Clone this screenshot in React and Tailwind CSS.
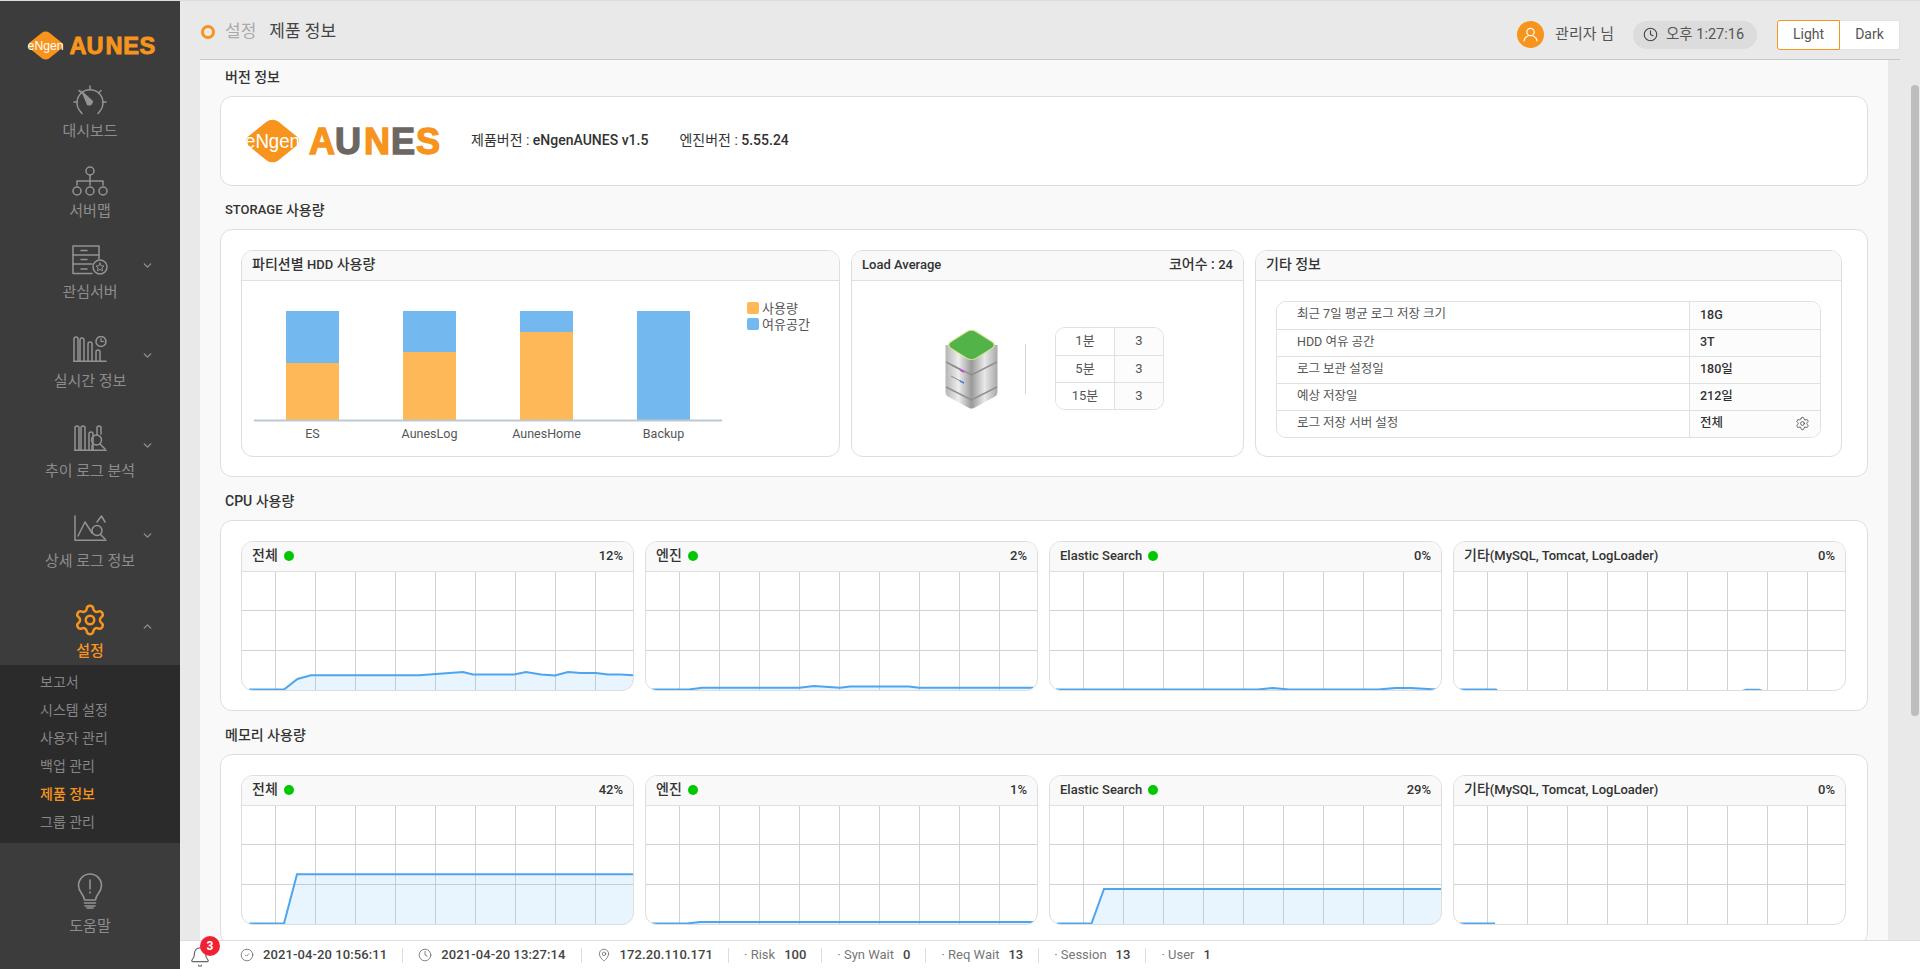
import React from "react";
import { Settings, ChevronDown, ChevronUp, Bell, CircleCheck, Clock, MapPin } from "lucide-react";

const ORANGE = "#f7941d";
const GRAY = "#6d6764";

function Logo({ width, height, mono }) {
  const letters = [
    ["A", ORANGE],
    ["U", mono ? ORANGE : GRAY],
    ["N", ORANGE],
    ["E", mono ? ORANGE : GRAY],
    ["S", ORANGE],
  ];
  const xs = [68, 94, 123, 150, 175];
  return (
    <svg width={width} height={height} viewBox="0 0 200 50" fill="none">
      <g transform="translate(31.500 25) scale(1.250 1) rotate(45)">
        <rect x="-17" y="-17" width="34" height="34" rx="6.500" fill={ORANGE} />
      </g>
      <text
        x="31.500"
        y="31.500"
        textAnchor="middle"
        fontFamily="'Liberation Sans', sans-serif"
        fontSize="20"
        fill="#fff"
        textLength="55"
        lengthAdjust="spacingAndGlyphs"
      >
        eNgen
      </text>
      {letters.map(([c, col], i) => (
        <text
          key={c}
          x={xs[i]}
          y="38"
          fontFamily="'Liberation Sans', sans-serif"
          fontWeight="700"
          fontSize="36"
          fill={col}
          stroke={col}
          strokeWidth="1.400"
        >
          {c}
        </text>
      ))}
    </svg>
  );
}

const ic = { fill: "none", stroke: "#939393", strokeWidth: 1.5, strokeLinecap: "round", strokeLinejoin: "round" };

function GaugeIcon() {
  return (
    <svg width="34" height="30" viewBox="0 0 34 30" {...ic}>
      <path d="M9 28.5 L7 26 A13 13 0 1 1 27 26 L25 28.5" />
      <path d="M17 1 v3.5 M6 5.5 l2.5 2.5 M28 5.5 l-2.5 2.5 M1 17 h3.5 M29.500 17 h3.500" />
      <path d="M7.500 4.500 L14 10.500 L20 16 A4 4 0 0 1 14 20 Z" fill="#939393" stroke="none" />
    </svg>
  );
}
function MapIcon() {
  return (
    <svg width="36" height="31" viewBox="0 0 36 31" {...ic}>
      <circle cx="18" cy="5" r="4" />
      <path d="M18 9 V19 M18 15 H5 V19 M18 15 H31 V19" />
      <circle cx="5" cy="25" r="4" />
      <circle cx="18" cy="25" r="4" />
      <circle cx="31" cy="25" r="4" />
    </svg>
  );
}
function ServerStarIcon() {
  return (
    <svg width="36" height="30" viewBox="0 0 36 30" {...ic}>
      <path d="M27 14 V1 H1 V28.500 H20" />
      <path d="M1 10 H27 M1 19 H20" />
      <path d="M9 5.500 H15 M9 14.500 H15 M9 24 H15" />
      <circle cx="28" cy="22" r="7" />
      <path d="M28 18 L29.200 20.800 L32 21 L29.900 22.900 L30.500 25.800 L28 24.300 L25.500 25.800 L26.100 22.900 L24 21 L26.800 20.800 Z" strokeWidth="1" />
    </svg>
  );
}
const bar = (x, y) => `M${x} 25 V${y + 2} a2 2 0 0 1 4 0 V25`;
function ChartClockIcon() {
  return (
    <svg width="34" height="26" viewBox="0 0 34 26" {...ic}>
      <path d="M0.500 25.200 H33" />
      <path d={bar(1, 1)} />
      <path d={bar(7, 2)} />
      <path d={bar(15, 6)} />
      <path d={bar(23, 14)} />
      <circle cx="28" cy="5.500" r="5" />
      <path d="M28 2.500 V5.500 H31" strokeWidth="1.2" />
    </svg>
  );
}
function ChartSearchIcon() {
  return (
    <svg width="33" height="26" viewBox="0 0 33 26" {...ic}>
      <path d="M0.500 25.200 H32" />
      <path d={bar(1, 1)} />
      <path d={bar(7, 1)} />
      <path d={bar(15, 7)} />
      <path d="M23 10 V3 a2 2 0 0 1 4 0 V9" />
      <circle cx="22.500" cy="15" r="5" />
      <path d="M26 19 L31 24 M18 20 V25" />
    </svg>
  );
}
function LineSearchIcon() {
  return (
    <svg width="33" height="26" viewBox="0 0 33 26" {...ic}>
      <path d="M1 1 V25.200 H32" />
      <path d="M4 21 L11 7 L18 18" />
      <path d="M23 7 L27.500 1 L31 7" />
      <circle cx="23" cy="15.500" r="5" />
      <path d="M26.500 19.500 L31 24" />
    </svg>
  );
}
function BulbIcon() {
  return (
    <svg width="26" height="36" viewBox="0 0 26 36" {...ic} strokeWidth="1.6">
      <path d="M7.500 27 C7 21 1.500 19.500 1.500 12.500 A11.500 11.500 0 0 1 24.500 12.500 C24.500 19.500 19 21 18.500 27 Z" />
      <path d="M7.500 30 H18.500 M8 33 H18 M10 35 H16" />
      <path d="M13 7 V16 M13 19 V20" />
    </svg>
  );
}
function ServerIllustration() {
  return (
    <svg width="53" height="81" viewBox="0 0 53 81">
      <defs>
        <linearGradient id="srv" x1="0" x2="1" y1="0" y2="0">
          <stop offset="0" stopColor="#b5b5b5" />
          <stop offset="0.25" stopColor="#ededed" />
          <stop offset="0.5" stopColor="#9a9a9a" />
          <stop offset="0.75" stopColor="#e8e8e8" />
          <stop offset="1" stopColor="#a8a8a8" />
        </linearGradient>
      </defs>
      <path d="M0.500 17 V64 Q0.500 67 3 68.500 L24 80 Q26.500 81 29 80 L50 68.500 Q52.500 67 52.500 64 V17 Z" fill="url(#srv)" />
      <path d="M1 34 L26.500 47 L52 34 M1 59 L26.500 72 L52 59" fill="none" stroke="#8f8f8f" strokeWidth="1.500" />
      <path d="M6 37 L19 44 M6 48 L19 55" stroke="#8a8a8a" strokeWidth="1" />
      <path d="M15 42 L19 44" stroke="#d83cd8" strokeWidth="1.500" />
      <path d="M15 53 L19 55" stroke="#3f7fe8" strokeWidth="1.500" />
      <g transform="translate(26.500 17) scale(1 0.640) rotate(45)">
        <rect x="-18" y="-18" width="36" height="36" rx="6.500" fill="#52b448" stroke="#d9e39a" strokeWidth="1.300" />
      </g>
    </svg>
  );
}

function NavItem({ h, Icon, label, chevronTop, active, open, mb = 6 }) {
  const Ch = open ? ChevronUp : ChevronDown;
  return (
    <div className="relative flex flex-col items-center justify-end" style={{ height: h }}>
      <div className="flex items-center justify-center" style={{ marginBottom: mb }}>
        <Icon />
      </div>
      <div className={`h-[20px] leading-[20px] text-[15px] ${active ? "text-[#f7941d] font-medium" : "text-[#8d8d8d]"}`}>{label}</div>
      {chevronTop !== undefined && (
        <Ch size={13} strokeWidth={2.6} color="#8f8f8f" className="absolute left-[141px]" style={{ top: chevronTop }} />
      )}
    </div>
  );
}

function Sidebar() {
  const subs = ["보고서", "시스템 설정", "사용자 관리", "백업 관리", "제품 정보", "그룹 관리"];
  return (
    <aside className="w-[180px] shrink-0 bg-[#3c3c3c] flex flex-col">
      <div className="h-[60px] pl-[25px] pt-[28px]">
        <Logo width={131} height={33} mono />
      </div>
      <NavItem h={80} Icon={GaugeIcon} label="대시보드" mb={6} />
      <NavItem h={80} Icon={MapIcon} label="서버맵" mb={4} />
      <NavItem h={81} Icon={ServerStarIcon} label="관심서버" chevronTop={38} mb={7} />
      <NavItem h={89} Icon={ChartClockIcon} label="실시간 정보" chevronTop={47} mb={9} />
      <NavItem h={90} Icon={ChartSearchIcon} label="추이 로그 분석" chevronTop={48} mb={10} />
      <NavItem h={90} Icon={LineSearchIcon} label="상세 로그 정보" chevronTop={48} mb={10} />
      <NavItem
        h={90}
        Icon={() => <Settings size={34} strokeWidth={1.75} color={ORANGE} />}
        label="설정"
        chevronTop={49}
        active
        open
        mb={4}
      />
      <div className="mt-[4px] h-[178px] bg-[#2b2b2b] pl-[40px] flex flex-col pt-[4px]">
        {subs.map((s) => (
          <div
            key={s}
            className={`h-[28px] leading-[27px] text-[14px] ${s === "제품 정보" ? "text-[#f7941d] font-medium" : "text-[#868686]"}`}
          >
            {s}
          </div>
        ))}
      </div>
      <div className="mt-[30px] flex flex-col items-center">
        <BulbIcon />
        <div className="mt-[7px] text-[15px] leading-[20px] text-[#8d8d8d]">도움말</div>
      </div>
    </aside>
  );
}

function Header() {
  return (
    <header className="mx-[20px] mt-px h-[58px] shrink-0 flex items-center justify-between border-b border-[#c9c9c9]">
      <div className="flex items-center mt-[3px] pl-px">
        <span className="w-[14px] h-[14px] rounded-full border-[3px] border-[#f7941d]" />
        <span className="ml-[10px] text-[17px] text-[#aaaaaa]">설정</span>
        <span className="ml-[13px] text-[17px] text-[#444444]">제품 정보</span>
      </div>
      <div className="flex items-center mt-[8px]">
        <span className="w-[27px] h-[27px] rounded-full bg-[#f7941d] flex items-center justify-center">
          <svg width="15" height="15" viewBox="0 0 15 15" fill="none" stroke="#fff" strokeWidth="1.200" strokeLinecap="round">
            <circle cx="7.500" cy="5" r="3.700" />
            <path d="M1 14 C1.500 10.500 4 9.300 5 9 M14 14 C13.500 10.500 11 9.300 10 9" />
          </svg>
        </span>
        <span className="ml-[11px] text-[15px] text-[#555555]">관리자 님</span>
        <div className="ml-[19px] h-[28px] w-[124px] rounded-full bg-[#dcdcdc] flex items-center pl-[10px]">
          <Clock size={15} strokeWidth={1.8} color="#444" />
          <span className="ml-[8px] text-[14.500px] text-[#555555]">오후 1:27:16</span>
        </div>
        <div className="ml-[20px] flex h-[30px]">
          <div className="w-[63px] flex items-center justify-center bg-white border border-[#f7941d] rounded-l-[3px] text-[14px] text-[#555555]">
            Light
          </div>
          <div className="w-[60px] flex items-center justify-center bg-white border-y border-r border-[#e2e2e2] rounded-r-[3px] text-[14px] text-[#555555]">
            Dark
          </div>
        </div>
      </div>
    </header>
  );
}

const L = ({ children }) => <span className="text-[13px]">{children}</span>;

function Heading({ children, first }) {
  return (
    <div className={`flex items-end pl-[5px] text-[14px] font-medium leading-[20px] text-[#333333] ${first ? "h-[36px] pb-[9px]" : "h-[43px] pb-[9px]"}`}>
      {children}
    </div>
  );
}

function Panel({ width, height, title, right, children }) {
  return (
    <div className="shrink-0 rounded-[12px] border border-[#dedede] bg-white overflow-hidden flex flex-col" style={{ width, height }}>
      <div className="h-[30px] shrink-0 flex items-center justify-between bg-[#f9f9f9] border-b border-[#e0e0e0] pl-[10px] pr-[10px] pb-[2px] text-[14px] font-medium text-[#333333]">
        <div className="flex items-center">{title}</div>
        {right}
      </div>
      <div className="flex-1 min-h-0 relative">{children}</div>
    </div>
  );
}

function BarChart() {
  const bars = [
    { x: 44, top: 82, label: "ES" },
    { x: 161, top: 71, label: "AunesLog" },
    { x: 278, top: 51, label: "AunesHome" },
    { x: 395, top: 139, label: "Backup" },
  ];
  const tf = { fontFamily: "Roboto, 'Noto Sans CJK KR', sans-serif", fontSize: 12.5, fill: "#555555" };
  return (
    <svg width="597" height="176" className="block">
      {bars.map((b) => (
        <g key={b.label}>
          <rect x={b.x} y="30" width="53" height={b.top - 30} fill="#74b8f0" />
          <rect x={b.x} y={b.top} width="53" height={139 - b.top} fill="#ffb858" />
          <text x={b.x + 26.5} y="157" textAnchor="middle" {...tf}>{b.label}</text>
        </g>
      ))}
      <rect x="12" y="138.500" width="468" height="2" fill="#bcc7cf" />
      <rect x="505" y="21" width="12" height="12" rx="2" fill="#ffb858" />
      <rect x="505" y="37" width="12" height="12" rx="2" fill="#74b8f0" />
      <text x="520" y="31.500" {...tf} fontSize="13">사용량</text>
      <text x="520" y="47.500" {...tf} fontSize="13">여유공간</text>
    </svg>
  );
}

function LoadContent() {
  const rows = [["1분", "3"], ["5분", "3"], ["15분", "3"]];
  return (
    <div className="h-full flex items-center pl-[93px]">
      <ServerIllustration />
      <div className="ml-[27px] w-px h-[50px] bg-[#d5d5d5]" />
      <div className="ml-[29px] w-[109px] rounded-[10px] border border-[#e0e0e0] overflow-hidden">
        {rows.map(([a, b], i) => (
          <div key={a} className={`flex h-[27px] text-[13px] text-[#555555] ${i ? "border-t border-[#e0e0e0]" : ""}`}>
            <div className="w-[59px] flex items-center justify-center pb-px bg-white border-r border-[#e0e0e0]">{a}</div>
            <div className="flex-1 flex items-center justify-center pb-px bg-[#fcfcfc]">{b}</div>
          </div>
        ))}
      </div>
    </div>
  );
}

function InfoContent() {
  const rows = [
    ["최근 7일 평균 로그 저장 크기", "18G"],
    ["HDD 여유 공간", "3T"],
    ["로그 보관 설정일", "180일"],
    ["예상 저장일", "212일"],
    ["로그 저장 서버 설정", "전체"],
  ];
  return (
    <div className="pl-[20px] pt-[20px]">
      <div className="w-[545px] rounded-[10px] border border-[#e0e0e0] overflow-hidden">
        {rows.map(([a, b], i) => (
          <div key={a} className={`flex h-[27px] text-[#555555] ${i ? "border-t border-[#e0e0e0]" : ""}`}>
            <div className="w-[413px] flex items-center bg-white border-r border-[#e0e0e0] pl-[20px] pb-[2px] text-[12.500px]">{a}</div>
            <div className="flex-1 flex items-center justify-between bg-[#fcfcfc] pl-[10px] pr-[10px] pb-px text-[12.500px] font-medium text-[#333333]">
              <span>{b}</span>
              {i === 4 && <Settings size={15} strokeWidth={1.3} color="#444" />}
            </div>
          </div>
        ))}
      </div>
    </div>
  );
}

function Chart({ pts, fill = true }) {
  const shifted = pts.map(([x, y]) => [x, y - 1]);
  const line = shifted.map((p) => p.join(",")).join(" ");
  const last = shifted[shifted.length - 1];
  const area = `${shifted[0][0]},118 ${line} ${last[0]},118`;
  return (
    <svg width="393" height="118" className="block">
      {[38.5, 78.5].map((y) => (
        <line key={y} x1="0" x2="393" y1={y} y2={y} stroke="#d2d2d2" />
      ))}
      {[33.5, 73.5, 113.5, 153.5, 193.5, 233.5, 273.5, 313.5, 353.5].map((x) => (
        <line key={x} x1={x} x2={x} y1="0" y2="118" stroke="#d2d2d2" />
      ))}
      {fill && <polygon points={area} fill="#42a5f5" fillOpacity="0.12" />}
      <polyline points={line} fill="none" stroke="#4ea5ee" strokeWidth="2" />
    </svg>
  );
}

function ChartPanel({ title, value, dot, pts, fill }) {
  return (
    <Panel
      width={393}
      height={150}
      title={
        <>
          {title}
          {dot && <span className="ml-[6px] w-[10px] h-[10px] rounded-full bg-[#00c800]" />}
        </>
      }
      right={<span className="text-[13px]">{value}</span>}
    >
      <Chart pts={pts} fill={fill} />
    </Panel>
  );
}

const OTHER = <><span>기타</span><L>(MySQL, Tomcat, LogLoader)</L></>;
const ES = <L>Elastic Search</L>;

const cpu = [
  [[7,118.5],[42,118.5],[55.5,108],[69,104.3],[177,104.3],[221,101],[231,103.5],[272,103.5],[284,101],[299,103.5],[313,104.5],[326,101],[339,102],[354,102],[366,103.5],[379,103.5],[393,104.5]],
  [[6,118.5],[43,118.5],[56,116.7],[153,116.7],[168,115],[194,116.7],[204,115.5],[263,115.5],[273,116.7],[393,116.7]],
  [[6,118.5],[208,118.5],[223,117],[239,118.5],[328,118.5],[345,117],[361,117],[387,118.5]],
  [[6,118.5],[42,118.5],[44,121],[285,121],[292,118.8],[305,118.8],[312,121],[393,121]],
];
const mem = [
  [[7,118.5],[42,118.5],[55,69.3],[393,69.3]],
  [[6,118.5],[41,118.5],[54,117],[389,117]],
  [[6.7,118.5],[41.5,118.5],[54,84],[393,84]],
  [[6,118.5],[41,118.5]],
];

function ChartRow({ pts, vals }) {
  return (
    <div className="flex gap-[11px]">
      <ChartPanel title="전체" dot value={vals[0]} pts={pts[0]} />
      <ChartPanel title="엔진" dot value={vals[1]} pts={pts[1]} />
      <ChartPanel title={ES} dot value={vals[2]} pts={pts[2]} />
      <ChartPanel title={OTHER} value={vals[3]} pts={pts[3]} fill={false} />
    </div>
  );
}

function Content() {
  return (
    <div className="w-[1688px] shrink-0 bg-[#f9f9f9] px-[20px] overflow-hidden">
      <Heading first>버전 정보</Heading>
      <div className="h-[90px] rounded-[12px] border border-[#dedede] bg-white flex items-center pl-[20px] text-[14px] text-[#333333]">
        <Logo width={200} height={50} />
        <div className="ml-[30px] pb-[2px]">제품버전 : <span className="font-medium">eNgenAUNES v1.5</span></div>
        <div className="ml-[31px] pb-[2px]">엔진버전 : <span className="font-medium">5.55.24</span></div>
      </div>
      <Heading><L>STORAGE</L>&nbsp;사용량</Heading>
      <div className="h-[248px] rounded-[12px] border border-[#dedede] bg-white pl-[20px] pt-[20px] flex gap-[11px]">
        <Panel width={599} height={207} title={<>파티션별&nbsp;<L>HDD</L>&nbsp;사용량</>}>
          <BarChart />
        </Panel>
        <Panel width={393} height={207} title={<L>Load Average</L>} right={<span>코어수 : <L>24</L></span>}>
          <LoadContent />
        </Panel>
        <Panel width={587} height={207} title="기타 정보">
          <InfoContent />
        </Panel>
      </div>
      <Heading>CPU 사용량</Heading>
      <div className="h-[191px] rounded-[12px] border border-[#dedede] bg-white pl-[20px] pt-[20px]">
        <ChartRow pts={cpu} vals={["12%", "2%", "0%", "0%"]} />
      </div>
      <Heading>메모리 사용량</Heading>
      <div className="h-[191px] rounded-[12px] border border-[#dedede] bg-white pl-[20px] pt-[20px]">
        <ChartRow pts={mem} vals={["42%", "1%", "29%", "0%"]} />
      </div>
    </div>
  );
}

const Sep = () => <span className="mx-[15px] w-px h-[15px] bg-[#dddddd]" />;

function Stat({ label, value }) {
  return (
    <div className="flex items-center text-[13px]">
      <span className="text-[#777777]">· {label}</span>
      <span className="ml-[9px] font-medium text-[#444444]">{value}</span>
    </div>
  );
}

function IconStat({ Icon, text }) {
  return (
    <div className="flex items-center text-[13px] font-medium tracking-[0.1px] text-[#444444]">
      <Icon size={14} strokeWidth={1.2} color="#555" />
      <span className="ml-[9px]">{text}</span>
    </div>
  );
}

function StatusBar() {
  return (
    <footer className="h-[29px] shrink-0 bg-white border-t border-[#dddddd] flex items-center relative">
      <div className="ml-[9px] mr-[29px] relative">
        <Bell size={22} strokeWidth={1.3} color="#666" className="mt-[3px]" />
        <span className="absolute left-[11px] top-[-7px] w-[20px] h-[20px] rounded-full bg-[#ee2233] text-white text-[12px] font-bold flex items-center justify-center">3</span>
      </div>
      <IconStat Icon={CircleCheck} text="2021-04-20 10:56:11" />
      <Sep />
      <IconStat Icon={Clock} text="2021-04-20 13:27:14" />
      <Sep />
      <IconStat Icon={MapPin} text="172.20.110.171" />
      <Sep />
      <Stat label="Risk" value="100" />
      <Sep />
      <Stat label="Syn Wait" value="0" />
      <Sep />
      <Stat label="Req Wait" value="13" />
      <Sep />
      <Stat label="Session" value="13" />
      <Sep />
      <Stat label="User" value="1" />
    </footer>
  );
}

export default function App() {
  return (
    <div className="h-[969px] w-[1920px] overflow-hidden flex pt-px bg-[#dcdcdc] font-[Roboto,'Noto_Sans_CJK_KR',sans-serif]">
      <Sidebar />
      <div className="flex-1 min-w-0 flex flex-col bg-[#e9e9e9]">
        <Header />
        <div className="flex-1 min-h-0 flex pl-[20px]">
          <Content />
          <div className="flex-1 pl-[23px] pt-[25px]">
            <div className="w-[8px] h-[631px] rounded-full bg-[#bdbdbd]" />
          </div>
        </div>
        <StatusBar />
      </div>
    </div>
  );
}
